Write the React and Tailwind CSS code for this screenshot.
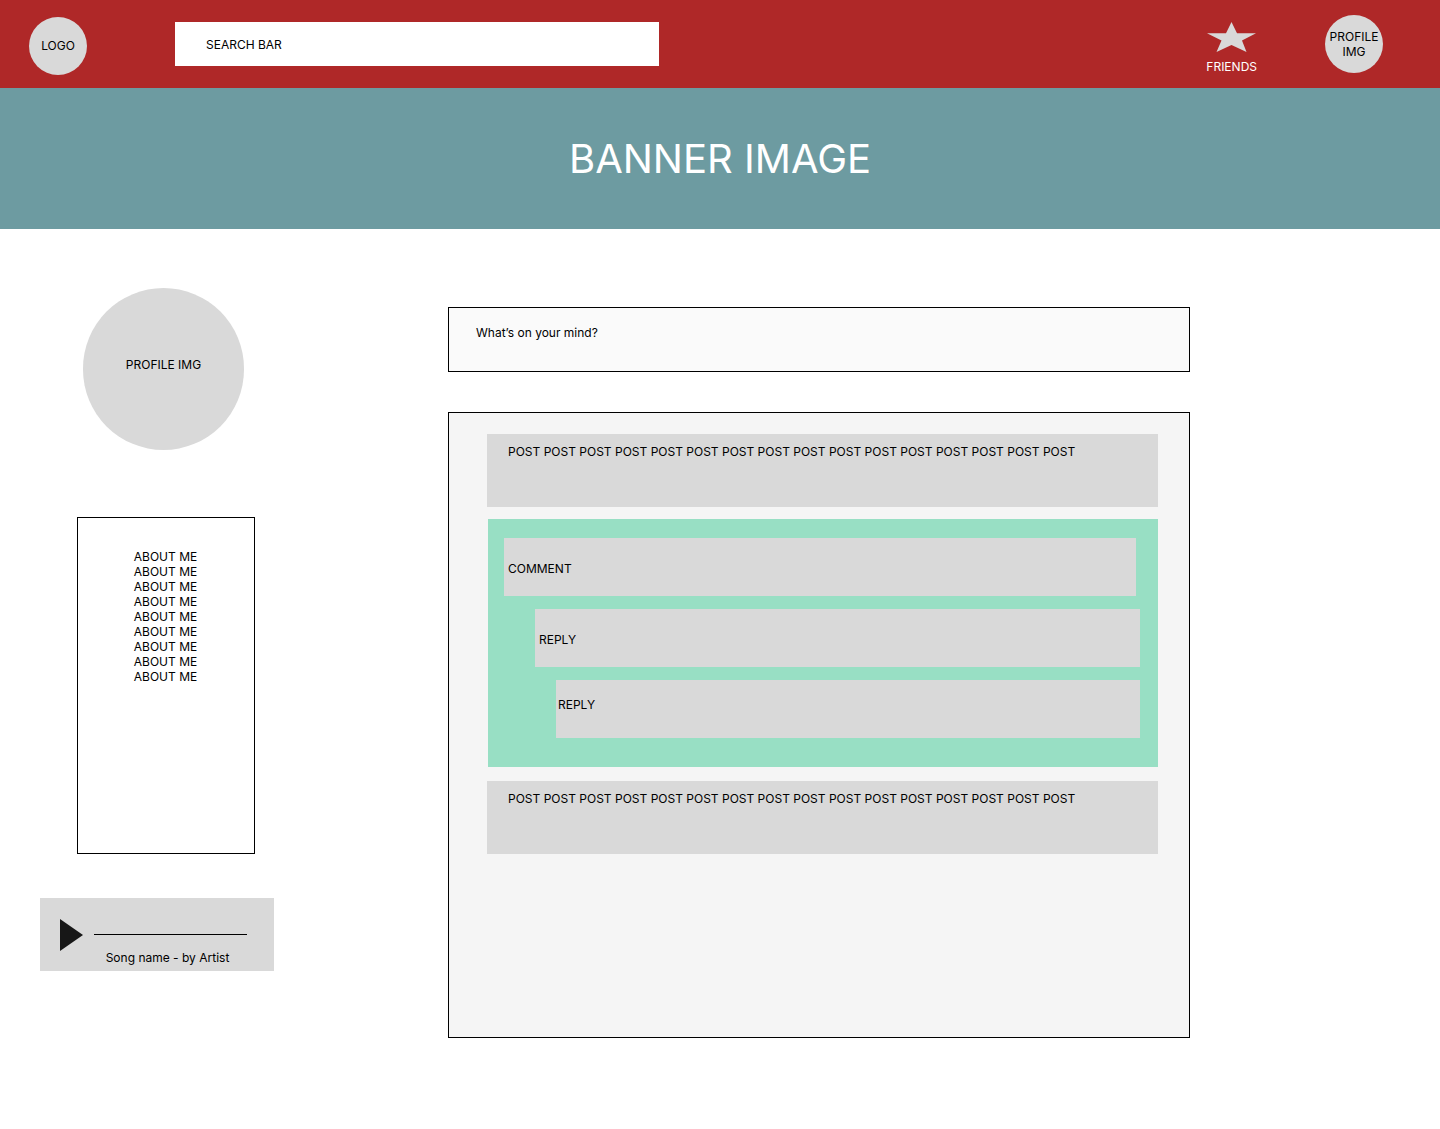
import React from "react";

const ABOUT_LINES = Array.from({ length: 9 }, () => "ABOUT ME");
const POST_TEXT = Array.from({ length: 16 }, () => "POST").join(" ");

function Header() {
  return (
    <header className="flex h-22 items-center bg-[#af2828] pr-[57px] pl-[29px]">
      <a
        href="#home"
        className="mt-1 flex size-[58px] shrink-0 items-center justify-center rounded-full bg-[#d9d9d9] pb-0.5"
      >
        LOGO
      </a>
      <input
        type="search"
        aria-label="Search"
        placeholder="SEARCH BAR"
        className="ml-22 h-11 w-full max-w-[484px] min-w-0 appearance-none bg-white pr-4 pl-[31px] outline-none placeholder:text-black placeholder:opacity-100"
      />
      <a href="#friends" className="mt-2 ml-auto flex flex-col items-center gap-[7px] pl-6 text-white">
        <svg viewBox="0 0 50 30" className="h-[30px] w-[50px]" fill="#d9d9d9" aria-hidden="true">
          <path d="M24.5 0 L30 11.3 H49 L35 18.5 L39.5 30 L24.5 23 L9.5 30 L14.5 18.5 L0 11.3 H19 Z" />
        </svg>
        FRIENDS
      </a>
      <a
        href="#profile"
        className="ml-17 flex size-[58px] shrink-0 items-center justify-center rounded-full bg-[#d9d9d9] text-center"
      >
        PROFILE
        <br />
        IMG
      </a>
    </header>
  );
}

function Player() {
  return (
    <section aria-label="Music player" className="mt-11 flex h-[73px] gap-[11px] bg-[#d9d9d9] pr-[27px] pl-5">
      <button type="button" aria-label="Play" className="mt-[21px] h-8 w-[23px] shrink-0">
        <svg viewBox="0 0 23 32" className="h-8 w-[23px]" fill="#171717" aria-hidden="true">
          <path d="M0 0 L23 16 L0 32 Z" />
        </svg>
      </button>
      <div className="flex grow flex-col pt-9">
        <input
          type="range"
          aria-label="Song position"
          defaultValue="0"
          className="h-px w-full appearance-none bg-black [&::-webkit-slider-thumb]:size-0 [&::-webkit-slider-thumb]:appearance-none"
        />
        <p className="mt-[15px] pr-1.5 text-center">Song name - by Artist</p>
      </div>
    </section>
  );
}

function Sidebar() {
  return (
    <aside className="flex w-[234px] shrink-0 flex-col pt-[59px]">
      <div className="ml-[43px] flex h-[162px] w-[161px] items-center justify-center rounded-full bg-[#d9d9d9] pb-2.5">
        PROFILE IMG
      </div>
      <section className="mt-[67px] ml-[37px] min-h-[337px] w-[178px] border border-black pt-[31px] pr-px text-center">
        {ABOUT_LINES.map((line, i) => (
          <p key={i}>{line}</p>
        ))}
      </section>
      <Player />
    </aside>
  );
}

function Post() {
  return <article className="min-h-[73px] bg-[#d9d9d9] px-[21px] pt-2.5">{POST_TEXT}</article>;
}

function Comments() {
  return (
    <section
      aria-label="Comments"
      className="mt-3 mb-3.5 ml-px flex flex-col gap-[13px] bg-[#98dfc4] pt-[19px] pr-[18px] pb-[29px] pl-4"
    >
      <article className="mr-1 min-h-[58px] bg-[#d9d9d9] pt-[23px] pl-1">COMMENT</article>
      <article className="ml-[31px] min-h-[58px] bg-[#d9d9d9] pt-[23px] pl-1">REPLY</article>
      <article className="ml-[52px] min-h-[58px] bg-[#d9d9d9] pt-[17px] pl-0.5">REPLY</article>
    </section>
  );
}

export default function App() {
  return (
    <div className="min-h-screen bg-white font-['Inter',sans-serif] text-[12px] leading-[15px] text-black">
      <Header />
      <div className="flex h-[141px] items-center justify-center bg-[#6d9ba1] text-white">
        <h1 className="text-[40px] leading-[48px]">BANNER IMAGE</h1>
      </div>
      <div className="flex pr-[250px] pb-[91px] pl-10">
        <Sidebar />
        <main className="ml-[174px] flex min-w-0 grow flex-col pt-[78px]">
          <textarea
            aria-label="New post"
            placeholder="What’s on your mind?"
            className="block h-[65px] w-full resize-none border border-black bg-[#fafafa] px-[27px] pt-[17px] outline-none placeholder:text-black placeholder:opacity-100"
          />
          <div className="mt-10 min-h-[626px] border border-black bg-[#f5f5f5] pt-[21px] pr-[31px] pl-[38px]">
            <Post />
            <Comments />
            <Post />
          </div>
        </main>
      </div>
    </div>
  );
}
